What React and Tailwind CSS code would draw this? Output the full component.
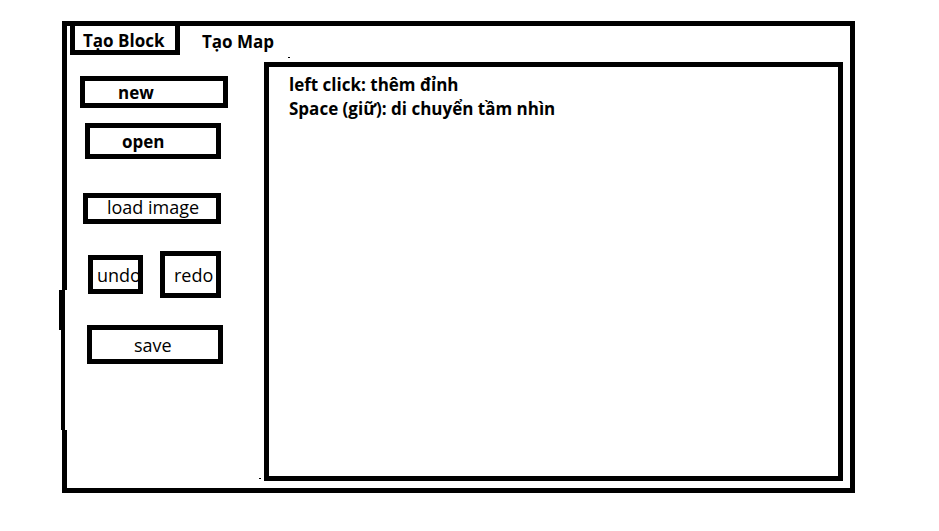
import React from "react";

const font = { fontFamily: '"Open Sans", "Noto Sans", sans-serif' };

export default function App() {
  return (
    <div className="w-[939px] h-[531px] bg-white relative overflow-hidden" style={font}>
      <div className="absolute left-[62px] top-[21px] w-[793px] h-[472px] border-[5px] border-black flex flex-col">
        {/* tabs */}
        <div className="h-[36px] flex items-start">
          <div className="ml-[3px] h-[29px] w-[110px] border-x-[5px] border-b-[5px] border-black flex items-center pl-[8px] pt-[4px] text-[17px] font-bold text-black leading-none">
            Tạo Block
          </div>
          <div className="ml-[22px] h-[29px] flex items-center pt-[2px] text-[17px] font-bold text-black leading-none">
            Tạo Map
          </div>
        </div>
        {/* body */}
        <div className="flex flex-1">
          <div className="w-[197px] flex flex-col items-start">
            <div className="ml-[13px] mt-[14px] w-[148px] h-[32px] border-[5px] border-black flex items-center pl-[33px] text-[17px] font-bold text-black leading-none">
              new
            </div>
            <div className="ml-[18px] mt-[15px] w-[136px] h-[36px] border-[5px] border-black flex items-center pl-[32px] text-[17px] font-bold text-black leading-none">
              open
            </div>
            <div className="ml-[16px] mt-[34px] w-[138px] h-[31px] border-[5px] border-black flex items-start pl-[19px] pt-[0px] text-[18px] text-black leading-none">
              load image
            </div>
            <div className="mt-[27px] flex items-start">
              <div className="ml-[21px] mt-[4px] w-[55px] h-[39px] border-[5px] border-black flex items-center pl-[4px] text-[18px] text-black leading-none whitespace-nowrap overflow-visible">
                undo
              </div>
              <div className="ml-[17px] w-[61px] h-[47px] border-[5px] border-black flex items-center pl-[9px] text-[18px] text-black leading-none">
                redo
              </div>
            </div>
            <div className="ml-[20px] mt-[27px] w-[136px] h-[39px] border-[5px] border-black flex items-center pl-[42px] text-[18px] text-black leading-none">
              save
            </div>
          </div>
          <div className="mb-[7px] mr-[7px] flex-1 border-[5px] border-black pl-[20px] pt-[6px] text-[17px] font-bold text-black leading-[24px]">
            <div>left click: thêm đỉnh</div>
            <div>Space (giữ): di chuyển tầm nhìn</div>
          </div>
        </div>
      </div>
      {/* hand-drawn wobble of the left edge */}
      <div className="absolute left-[65px] top-[290px] w-[2px] h-[140px] bg-white" />
      <div className="absolute left-[59px] top-[290px] w-[3px] h-[40px] bg-black" />
      <div className="absolute left-[61px] top-[330px] w-[1px] h-[100px] bg-black" />
      <div className="absolute left-[288px] top-[57px] w-[2px] h-[1px] bg-black" />
      <div className="absolute left-[259px] top-[478px] w-[2px] h-[1px] bg-black" />
    </div>
  );
}
